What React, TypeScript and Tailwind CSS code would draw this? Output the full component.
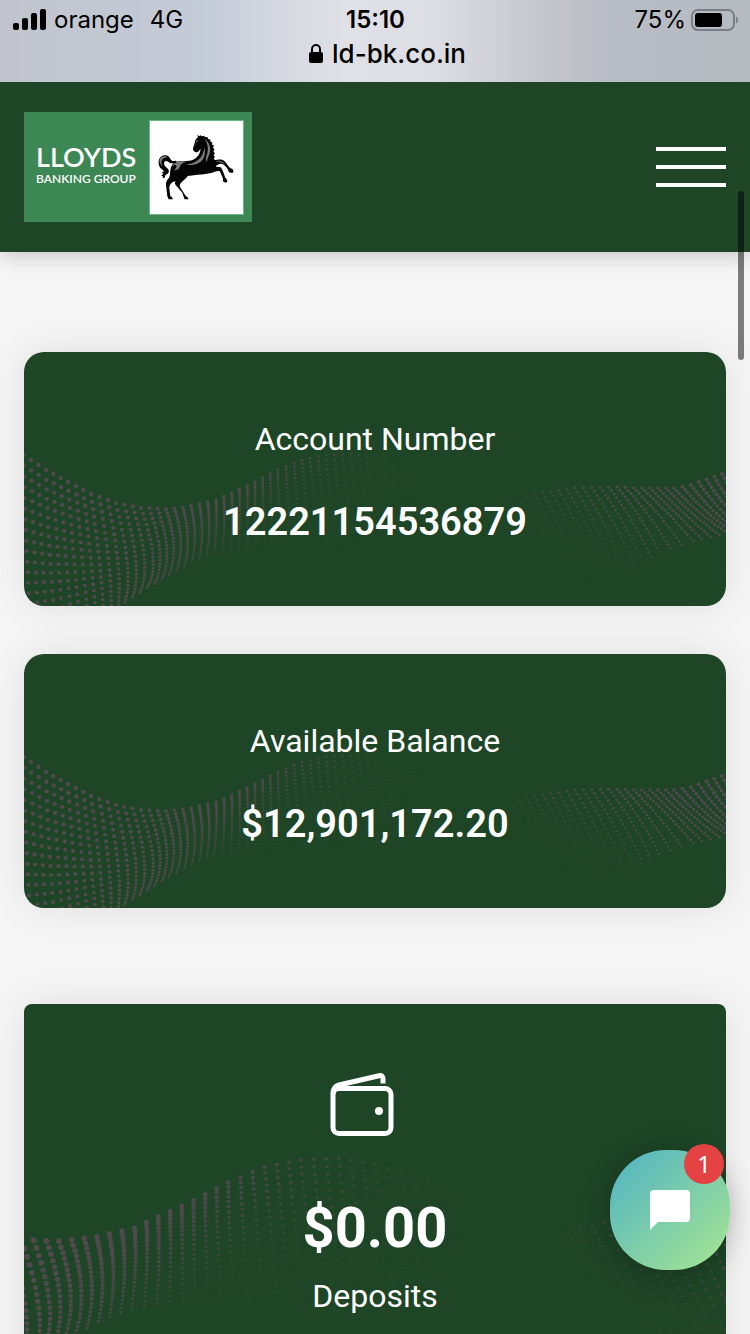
import React from 'react';

interface Dot {
  x: number;
  y: number;
  r: number;
  opacity: number;
}

// Each guide is one column of a wave:
// [topX, topY, midX, midY, bottomX, bottomY, topRadius, bottomRadius, topOpacity, bottomOpacity]
type Guide = number[];

const LEFT_WAVE: Guide[] = [
  [-8, 98, -6, 210, 2, 318, 2.2, 2, 1, 1],
  [22, 118, 25, 215, 34, 300, 2.2, 1.9, 1, 1],
  [44, 130, 50, 218, 58, 284, 2.2, 1.8, 1, 1],
  [67, 142, 78, 220, 80, 268, 2.2, 1.7, 1, 1],
  [92, 151, 110, 222, 101, 250, 2.1, 1.5, 1, 1],
  [117, 156, 138, 214, 123, 236, 2, 1.3, 1, 0.95],
  [142, 157, 156, 196, 145, 223, 1.9, 1.2, 1, 0.85],
  [167, 154, 174, 184, 168, 210, 1.8, 1.1, 1, 0.75],
  [192, 148, 194, 172, 190, 201, 1.7, 1, 1, 0.6],
  [231, 130, 231, 156, 232, 194, 1.6, 0.9, 0.95, 0.35],
  [254, 118, 254, 148, 258, 195, 1.5, 0.8, 0.9, 0.25],
  [278, 108, 282, 146, 287, 202, 1.4, 0.8, 0.8, 0.18],
  [302, 103, 306, 150, 315, 211, 1.3, 0.8, 0.7, 0.12],
  [327, 102, 332, 156, 344, 220, 1.2, 0.8, 0.6, 0.08],
  [351, 106, 358, 164, 372, 230, 1.1, 0.8, 0.45, 0.06],
  [386, 118, 396, 172, 410, 238, 1, 0.8, 0.25, 0.05],
  [423, 134, 434, 184, 450, 246, 1, 0.8, 0.08, 0.03],
];

const RIGHT_WAVE: Guide[] = [
  [478, 151, 500, 190, 528, 248, 1, 0.8, 0.25, 0.05],
  [511, 142, 530, 182, 560, 240, 1.2, 0.8, 0.6, 0.12],
  [551, 136, 574, 174, 594, 224, 1.4, 1, 0.8, 0.35],
  [593, 135, 618, 164, 635, 200, 1.5, 1.2, 1, 0.75],
  [618, 136, 644, 160, 669, 189, 1.6, 1.3, 1, 0.9],
  [650, 136, 674, 162, 704, 181, 1.7, 1.4, 1, 1],
  [667, 133, 690, 164, 722, 184, 1.9, 1.5, 1, 1],
  [698, 122, 718, 160, 750, 188, 2.1, 1.6, 1, 1],
  [714, 114, 734, 156, 766, 184, 2.1, 1.6, 1, 1],
];

const mix = (a: number, b: number, t: number) => a + (b - a) * t;

const buildWave = (guides: Guide[], rows: number): Dot[] => {
  const dots: Dot[] = [];
  for (let i = 0; i < guides.length - 1; i++) {
    const from = guides[i];
    const to = guides[i + 1];
    const steps = Math.round((to[0] - from[0]) / 8);
    for (let s = 0; s < steps; s++) {
      const g = from.map((value, k) => mix(value, to[k], s / steps));
      for (let row = 0; row <= rows; row++) {
        const t = row / rows;
        // quadratic curve through the column
        dots.push({
          x: (1 - t) * (1 - t) * g[0] + 2 * t * (1 - t) * g[2] + t * t * g[4],
          y: (1 - t) * (1 - t) * g[1] + 2 * t * (1 - t) * g[3] + t * t * g[5],
          r: mix(g[6], g[7], t),
          opacity: mix(g[8], g[9], t),
        });
      }
    }
  }
  return dots;
};

const DOTS = [...buildWave(LEFT_WAVE, 20), ...buildWave(RIGHT_WAVE, 18)];

const DotWave: React.FC = () => (
  <svg
    className="absolute inset-0 w-full h-full"
    viewBox="0 0 702 254"
    preserveAspectRatio="xMidYMid slice"
    fill="#504a4e"
    aria-hidden="true"
  >
    {DOTS.map((dot, i) => (
      <circle key={i} cx={dot.x.toFixed(1)} cy={dot.y.toFixed(1)} r={dot.r.toFixed(2)} opacity={dot.opacity.toFixed(2)} />
    ))}
  </svg>
);

const Horse: React.FC = () => (
  <svg className="w-full h-full" viewBox="0 0 285 285" fill="#050505" aria-hidden="true">
    {/* head, mane, back and belly */}
    <path d="M145 41L150 47L155 44L159 47L166 45L168 49L176 49L178 55L185 57L185 63L191 66L190 72L196 76L193 82L198 87L194 93L199 99L195 104L199 110L195 115L200 121L196 126L203 138C202 148 194 156 183 160C166 165 150 163 134 166C120 169 108 166 100 174L78 186C66 182 61 170 62 156C63 143 66 133 76 126C92 120 110 124 126 121C140 117 147 109 152 98C154 93 155 89 155 86L150 91C147 95 142 97 138 95C133 93 131 89 132 83C134 77 136 72 137 67C138 59 141 54 147 50Z" />
    {/* tail */}
    <path d="M80 127C70 131 62 131 56 125C51 121 45 122 43 128C42 134 47 140 53 145C59 150 60 157 54 162L47 166L45 174L38 175L40 169L34 168L41 162L36 158L43 155C40 149 31 146 28 137C23 120 30 107 43 105C54 104 59 109 63 117C67 123 73 124 80 121Z" />
    {/* hind legs */}
    <path d="M63 152C62 162 61 170 58 175C52 181 48 188 49 196L53 230L57 240H70C70 236 67 233 62 229L59 204C60 196 64 191 70 187C81 181 94 178 104 166Z" />
    <path d="M84 170C86 178 80 183 77 188C75 192 78 196 82 200L99 220L106 240H118C118 236 115 233 109 229L93 204C90 199 91 195 94 191C101 183 113 177 119 162Z" />
    {/* forelegs */}
    <path d="M188 126C197 118 210 116 222 119C230 123 236 132 242 141L254 149L256 156L252 159L242 157L238 147C232 138 226 132 218 131C210 131 205 136 198 141Z" />
    <path d="M182 150C193 140 205 138 217 142C223 150 226 161 230 172L236 180L237 186L232 189L223 185L224 177L214 154C206 151 198 155 186 160Z" />
    <g fill="#7d7d7d">
      <path d="M29 122C30 109 44 105 54 111C47 112 37 114 35 124C34 130 37 136 40 141C33 136 29 129 29 122Z" />
      <path d="M68 141C73 126 91 121 112 125C100 128 93 132 91 142C87 151 78 150 74 152C79 145 84 139 79 135C75 133 71 137 68 141Z" />
      <path d="M112 133C133 131 151 121 160 104C164 96 166 88 166 80C171 96 168 113 157 123C145 133 129 137 112 133Z" />
      <path d="M166 54C181 65 188 82 183 99C180 109 174 116 175 126C168 117 173 107 176 97C180 81 175 66 166 54Z" />
      <path d="M201 123C212 119 224 123 231 134C222 127 213 123 201 123Z" />
      <path d="M142 60L149 58L142 66L137 82Z" />
    </g>
  </svg>
);

const Logo: React.FC = () => (
  <a
    href="#"
    aria-label="Lloyds Banking Group"
    className="flex items-center justify-between w-[228px] h-[110px] pl-3 pr-2 bg-[#3d8755] text-white font-['Lato',sans-serif]"
  >
    <span className="flex flex-col">
      <span className="text-[27px] leading-6 font-semibold">LLOYDS</span>
      <span className="text-xs leading-5 font-semibold whitespace-nowrap">BANKING GROUP</span>
    </span>
    <span className="block size-[95px] shrink-0 bg-white border border-[#6db58a]">
      <Horse />
    </span>
  </a>
);

const StatusBar: React.FC = () => (
  <div className="relative z-20 shrink-0 h-[82px] pt-1 bg-[linear-gradient(90deg,#c1c4cd_0%,#c4ccd8_28%,#d5d8e0_37%,#e0e1e7_46%,#dddee3_58%,#c4c5cb_73%,#b8bcc4_82%,#b6bbc2_100%)] text-black font-['Inter',sans-serif]">
    <div className="grid grid-cols-3 items-center h-8 pl-3 pr-[11px] text-2xl">
      <div className="flex items-center gap-2">
        <svg className="w-[34px] h-[22px]" viewBox="0 0 34 22" aria-hidden="true">
          <rect x="1" y="14" width="6" height="7" rx="2" />
          <rect x="10" y="9" width="6" height="12" rx="2" />
          <rect x="19" y="4" width="6" height="17" rx="2" />
          <rect x="28" y="0" width="6" height="21" rx="2" />
        </svg>
        <span>orange</span>
        <span className="ml-2">4G</span>
      </div>
      <span className="text-center font-semibold">15:10</span>
      <div className="flex items-center justify-end gap-1">
        <span>75%</span>
        <svg className="w-[49px] h-[24px]" viewBox="0 0 49 24" aria-hidden="true">
          <rect x="2" y="2" width="42" height="20" rx="6" fill="none" stroke="#7b7e84" strokeWidth="2" />
          <rect x="5" y="5" width="27" height="14" rx="3" />
          <path d="M46 8.500c2.500 1 2.500 6 0 7z" fill="#7b7e84" />
        </svg>
      </div>
    </div>
    <div className="flex items-center justify-center gap-2 h-[34px] pl-6 text-[26px] font-medium">
      <svg className="w-4 h-5" viewBox="0 0 16 20" aria-hidden="true">
        <path d="M4 10V6a4 4 0 0 1 8 0v4" fill="none" stroke="#000" strokeWidth="2" />
        <rect x="1" y="9" width="14" height="11" rx="2" />
      </svg>
      <span>ld-bk.co.in</span>
    </div>
  </div>
);

interface InfoCardProps {
  label: string;
  value: string;
}

const InfoCard: React.FC<InfoCardProps> = ({ label, value }) => (
  <section className="relative overflow-hidden rounded-[20px] bg-[#1d4526] pt-[63px] pb-[60px] text-center text-white">
    <DotWave />
    <h2 className="relative text-[32px] leading-12">{label}</h2>
    <p className="relative mt-[35px] text-[38px] leading-12 font-semibold">{value}</p>
  </section>
);

const App: React.FC = () => (
  <div className="relative flex flex-col h-screen overflow-hidden bg-[#f6f6f6] font-['Roboto',sans-serif]">
    <StatusBar />

    <header className="relative z-10 shrink-0 flex items-center justify-between px-6 py-[30px] bg-[#1d4526] shadow-[0_4px_20px_rgba(0,0,0,0.2)]">
      <Logo />
      <button type="button" aria-label="Open menu" className="flex flex-col gap-[14px] w-[70px]">
        <span className="block w-full h-1 bg-white" />
        <span className="block w-full h-1 bg-white" />
        <span className="block w-full h-1 bg-white" />
      </button>
    </header>

    <main className="flex-1 min-h-0 overflow-hidden px-6 pt-[100px]">
      <div className="flex flex-col gap-12">
        <div className="rounded-[20px] shadow-[0_0_40px_rgba(0,0,0,0.1)]">
          <InfoCard label="Account Number" value="12221154536879" />
        </div>
        <div className="rounded-[20px] shadow-[0_0_40px_rgba(0,0,0,0.1)]">
          <InfoCard label="Available Balance" value="$12,901,172.20" />
        </div>
      </div>

      <div className="mt-24 rounded-lg shadow-[0_0_40px_rgba(0,0,0,0.1)]">
        <section className="relative flex flex-col items-center overflow-hidden rounded-lg bg-[#1d4526] pt-[68px] pb-16 text-white">
          <DotWave />
          <svg className="relative size-16 mr-[26px]" viewBox="0 0 64 64" fill="none" stroke="currentColor" strokeWidth="5" aria-hidden="true">
            <rect x="3" y="16.500" width="58" height="45" rx="6" />
            <path d="M3 22C3 17 5 14 9 13L49 3.700Q53 3 53 7V11.500" />
            <circle cx="49" cy="39" r="4" fill="currentColor" stroke="none" />
          </svg>
          <p className="relative mt-14 text-[56px] leading-[72px] font-bold">$0.00</p>
          <h2 className="relative mt-2 mb-1 text-[32px] leading-12">Deposits</h2>
        </section>
      </div>
    </main>

    <div className="absolute z-20 right-[6px] top-[191px] w-[6px] h-[169px] rounded-full bg-black/50" />

    <button
      type="button"
      aria-label="Open chat, 1 new message"
      className="absolute z-20 right-5 bottom-16 flex items-center justify-center size-[120px] rounded-[56px] bg-[linear-gradient(135deg,#4fb3c6_0%,#a8e690_100%)] shadow-[0_4px_28px_rgba(0,0,0,0.25)]"
    >
      <svg className="size-10" viewBox="0 0 40 40" fill="#fff" aria-hidden="true">
        <path d="M4 0H36a4 4 0 0 1 4 4V28a4 4 0 0 1-4 4H8L0 40V4a4 4 0 0 1 4-4z" />
      </svg>
      <span className="absolute right-[6px] -top-[6px] flex items-center justify-center size-10 rounded-full bg-[#e54343] text-white text-2xl font-['Noto_Sans',sans-serif]">
        1
      </span>
    </button>
  </div>
);

export default App;
